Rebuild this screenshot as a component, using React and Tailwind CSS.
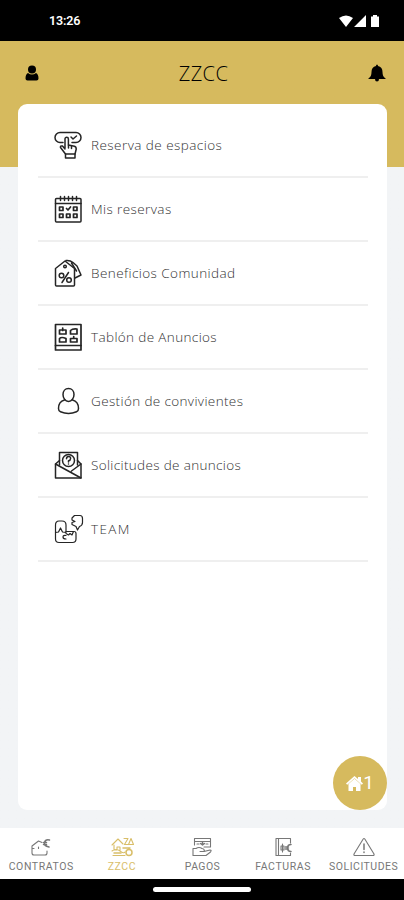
import React from 'react';

/* Shared wrapper for the 28px outlined menu icons */
function MenuIcon({ children, width = 1.5 }) {
  return (
    <svg
      viewBox="0 0 28 28"
      className="h-7 w-7 flex-shrink-0 overflow-visible"
      fill="none"
      stroke="#252525"
      strokeWidth={width}
      strokeLinecap="round"
      strokeLinejoin="round"
    >
      {children}
    </svg>
  );
}

function BookingIcon() {
  return (
    <MenuIcon>
      <path d="M9 11.500H6a5 5 0 0 1 0-10h16a5 5 0 0 1 0 10h-4" />
      <path d="m17 6 2 2 3.500-3" />
      <path d="M11 17V8a1.700 1.700 0 0 1 3.400 0v6l6 1.200q2 .6 1.800 3L21 23H11.500l-5-6.500q-.5-2 2-1.500L11 18" />
      <path d="M11.500 23v4H21v-4M14.500 14v3M17.500 15v2.500" />
    </MenuIcon>
  );
}

function CalendarIcon() {
  return (
    <MenuIcon>
      <rect x="1.500" y="3.500" width="25.500" height="23.500" rx="1" />
      <path d="M1.500 8.500H27M6.500 1.500v4M10.500 1.500v4M14.500 1.500v4M18.500 1.500v4M22.500 1.500v4" />
      <g strokeWidth="1.700">
        <rect x="5.500" y="12" width="3.500" height="3.500" />
        <path d="m12.500 13.500 1.500 1.500 2.500-3" />
        <rect x="19.500" y="12" width="3.500" height="3.500" />
        <rect x="5.500" y="19" width="3.500" height="3.500" />
        <rect x="12.500" y="19" width="3.500" height="3.500" />
        <rect x="19.500" y="19" width="3.500" height="3.500" />
      </g>
    </MenuIcon>
  );
}

function DiscountIcon() {
  return (
    <MenuIcon>
      <path d="M1.500 26V9.500L11 2l9.500 7.500V26q0 1-1 1h-17q-1 0-1-1Z" />
      <path d="M12 1.500q4-.5 7 2l4 3.500 4 9-6 3M17.500 4l5 8" />
      <circle cx="11" cy="7.500" r="1.300" />
      <path d="m14.500 13.500-6.500 10" />
      <circle cx="7.500" cy="16.500" r="2.300" />
      <circle cx="15" cy="21" r="2.300" />
    </MenuIcon>
  );
}

function BoardIcon() {
  return (
    <MenuIcon width={1.7}>
      <rect x="1.500" y="1.500" width="25.500" height="25.500" />
      <path d="M1.500 22.500H27" />
      <path d="M5.500 7H12V11H5.500zM8.700 5v2.500M16.500 7.500q2-2 6.500-1.500v5h-6.500zM5.500 15.500q2-2 6.500 0V19H5.500zM16.500 15.500H23V19h-6.500zM19.700 13.500v2" />
    </MenuIcon>
  );
}

function PersonIcon() {
  return (
    <MenuIcon>
      <path d="M14.500 1.500c-3.300 0-5.500 2.500-5.500 6s2.200 7 5.500 7S20 11 20 7.500s-2.200-6-5.500-6Z" />
      <path d="M10.500 13C6.500 14 4.500 17 4.500 21.500q0 2.500 2 3.300 8 3.200 16 0 2-.8 2-3.300c0-4.500-2-7.500-6-8.500" />
    </MenuIcon>
  );
}

function EnvelopeIcon() {
  return (
    <MenuIcon>
      <path d="M5.500 14V1.500h18V14" />
      <circle cx="14.500" cy="9.500" r="6" />
      <path d="M12.500 7.800q0-2.300 2.100-2.300t2 2-2.100 2.200v1.300M14.500 13v.1" />
      <path d="m5.500 9.500-4 3.500v14H27V13l-3.500-3.500" />
      <path d="M1.500 13 27 27M27 13l-9.500 7" />
    </MenuIcon>
  );
}

function TeamIcon() {
  return (
    <MenuIcon width={1.2}>
      <path d="M1.500 17.500V10Q1.500 6 5 6h3q4 0 4 4v7M1.500 17.500 4.500 17 6.500 13l2 4 3.500.500" />
      <path d="M12 16.500h8q2 0 2 2V24q0 3.500-3.500 3.500H5q-3.500 0-3.500-3.500v-6.500" />
      <path d="M19.500 16.500 18 20l-2-1.500-1.500 1.500L12 18.500M12 20.500q-3-.5-3 1.500t3 2" />
      <path d="M18 3 20.500.500H26q2.500 0 2.500 3v4q0 3-3 4l-2 3.500-1.500-3.500-4-2V7.500l3-1-3-1.500Z" />
    </MenuIcon>
  );
}

const menu = [
  { label: 'Reserva de espacios', icon: BookingIcon, tracking: 'tracking-[0.450px]' },
  { label: 'Mis reservas', icon: CalendarIcon, tracking: 'tracking-[0.400px]' },
  { label: 'Beneficios Comunidad', icon: DiscountIcon, tracking: 'tracking-[0.430px]' },
  { label: 'Tablón de Anuncios', icon: BoardIcon, tracking: 'tracking-[0.370px]' },
  { label: 'Gestión de convivientes', icon: PersonIcon, tracking: 'tracking-[0.370px]' },
  { label: 'Solicitudes de anuncios', icon: EnvelopeIcon, tracking: 'tracking-[0.340px]' },
  { label: 'TEAM', icon: TeamIcon, tracking: 'tracking-[1.400px]' },
];

const tabs = [
  {
    label: 'CONTRATOS',
    tracking: 'tracking-[0.600px]',
    paths: 'M12 5.500 8.500 4 2 9v7q0 2 2 2h11q2 0 2-2v-2M2 11.500h2M8.500 10v1.500',
    bold: 'M19.500 3q-4-1-5 2.500t4.500 4.500M13.500 5.500h3M13.500 7.500h3',
  },
  {
    label: 'ZZCC',
    tracking: 'tracking-[0.600px]',
    active: true,
    paths: 'M1 8 7 2l5 5M3 8v5h3v-3h3v3M13 1.500h4l-3.500 6h3.500M17.500 7.500l2.500-6 2.500 6zM1 14q4-3 8 0t5 1M2 18.500h12',
    bold: 'M12 11h7M3 16h7M18 18.500a3 3 0 1 0 0-6 3 3 0 0 0 0 6',
  },
  {
    label: 'PAGOS',
    tracking: 'tracking-[0.400px]',
    paths: 'M3.500 8V1.500h16V10H13M3.500 4.500h16M6 7h2M15 7h2M2 18.500v-7h3q3-2 6 0 3 .5 2 3H9M13 14.500l6-1.500q2 0 .5 2L15 18.500H2',
    bold: 'M11.500 5v3M9.500 6.500l2 1.500 2-1.500',
  },
  {
    label: 'FACTURAS',
    tracking: 'tracking-[0.600px]',
    paths: 'M18.500 6V1.500H4V18.500h14.500V16M6.500 1.500v17M9 9h3v4H9zM10.500 7v8',
    bold: 'M19 7.500q-3.500 0-3.500 3.500t3.500 3.500M13.500 10h3M13.500 12h3',
  },
  {
    label: 'SOLICITUDES',
    tracking: 'tracking-[0.500px]',
    paths: 'M10.200 2q.8-1 1.600 0L21 17q.5 1.500-1 1.500H2q-1.500 0-1-1.500Z',
    bold: 'M11 7v5.500M11 15v.5',
  },
];

function StatusBar() {
  return (
    <div className="flex h-[41px] items-center justify-between bg-black pl-[49px] pr-[23px] text-white">
      <span className="pt-[2px] font-[Roboto] text-[12.500px] font-semibold tracking-[-0.150px]">13:26</span>
      <svg viewBox="0 0 42 14" className="h-[14px] w-[42px]" fill="white">
        <path d="M0 4q7-5 14 0L7 13zM15 13 27 1v12zM32 2.500h2V1h4v1.500h2V13h-8z" />
      </svg>
    </div>
  );
}

function Header() {
  return (
    <header className="flex h-16 items-center justify-between pl-[25px] pr-[18px]">
      <svg viewBox="0 0 14 16" className="h-4 w-[14px]">
        <circle cx="7" cy="4.500" r="4" />
        <path d="M3 8q4 3 8 0 2.500 1 2.500 5.500 0 2-2 2h-9q-2 0-2-2Q.5 9 3 8Z" />
      </svg>
      <h1 className="pt-[1px] font-['Open_Sans'] text-[20px] font-light tracking-[0.400px] text-black">ZZCC</h1>
      <svg viewBox="0 0 18 18" className="h-[18px] w-[18px]">
        <path d="M8 2q0-1.500 1-1.500T10 2q4.500 1 4.500 6 0 4.500 2.500 6 1 .7.500 1H.500Q0 14.700 1 14q2.500-1.500 2.500-6 0-5 4.500-6ZM7 15h4q0 2.500-2 2.500T7 15Z" />
      </svg>
    </header>
  );
}

export default function App() {
  return (
    <div className="flex h-[900px] w-[404px] flex-col bg-[#f3f4f6] font-['Open_Sans',sans-serif]">
      <StatusBar />

      {/* Gold band runs behind the top of the card */}
      <main className="h-[787px] bg-linear-to-b from-[#d6ba5e] from-[126px] to-[#f2f4f6] to-[126px]">
        <Header />
        <section className="mt-[-1px] mr-[17px] ml-[18px] h-[706px] rounded-[9px] bg-white pt-[9.500px] pr-[19px] pl-[20px]">
          <ul>
            {menu.map(({ label, icon: Icon, tracking }) => (
              <li
                key={label}
                className="flex h-[64.100px] items-center gap-[9px] border-b-2 border-[#efefef] pl-[16px]"
              >
                <Icon />
                <span className={`pt-[1px] text-[13.500px] font-light text-[#333] ${tracking}`}>{label}</span>
              </li>
            ))}
          </ul>
        </section>
      </main>

      {/* Bottom tabs */}
      <nav className="grid h-[51px] grid-cols-5 bg-white pl-[1px]">
        {tabs.map((tab) => (
          <div
            key={tab.label}
            className={`flex flex-col items-center pt-[8.500px] ${tab.active ? 'text-[#d9be69]' : 'text-[#777]'}`}
          >
            <svg
              viewBox="0 0 22 20"
              className="h-5 w-[22px] overflow-visible"
              fill="none"
              stroke="currentColor"
              strokeLinecap="round"
              strokeLinejoin="round"
            >
              <path d={tab.paths} strokeWidth="1.100" />
              <path d={tab.bold} strokeWidth="1.500" />
            </svg>
            <span className={`mt-[2px] font-[Roboto] text-[10.500px] leading-[15px] ${tab.tracking}`}>{tab.label}</span>
          </div>
        ))}
      </nav>
      <div className="flex h-[21px] justify-center bg-black pt-2">
        <div className="h-[5px] w-[98px] rounded-full bg-white" />
      </div>

      {/* Floating home button */}
      <button className="absolute left-[333px] top-[756px] flex h-[54px] w-[54px] items-center justify-center rounded-full bg-[#d6ba5e] text-white">
        <svg viewBox="0 0 17 15" className="h-[15px] w-[17px]" fill="currentColor">
          <path d="M0 7.500 8.500 0 12 3V1h3v4.600L17 7.500l-1.200 1.300L8.500 2.300 1.200 8.800ZM2.500 8l6-5.300 6 5.300v7h-4.500v-4h-3v4H2.500Z" />
        </svg>
        <span className="font-[Roboto] text-[19px] leading-5">1</span>
      </button>
    </div>
  );
}
